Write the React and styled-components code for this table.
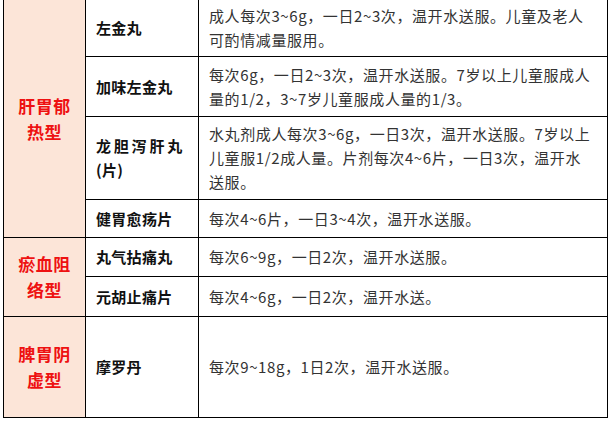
import React from 'react'
import styled, { createGlobalStyle } from 'styled-components'

const GlobalStyle = createGlobalStyle`
  * {
    box-sizing: border-box;
  }
  body {
    margin: 0;
    background: #ffffff;
    font-family: 'Noto Sans CJK SC', 'Noto Sans', sans-serif;
  }
`

const Page = styled.div`
  padding: 0 4px 0 3px;
  overflow: hidden;
  height: 424px;
`

const Table = styled.table`
  width: 605px;
  margin-top: -1px;
  border-collapse: collapse;
  table-layout: fixed;
`

const Row = styled.tr`
  height: ${p => p.h}px;
`

const Category = styled.td`
  width: 82px;
  background: #fce5d8;
  border: 1px solid #000;
  color: #ee1111;
  font-weight: 700;
  font-size: 17px;
  line-height: 26px;
  letter-spacing: 0.5px;
  text-align: center;
  vertical-align: middle;
  padding: 0 4px;
`

const Name = styled.td`
  width: 113px;
  border: 1px solid #000;
  color: #111;
  font-weight: 700;
  font-size: 15px;
  line-height: 24px;
  padding: 0 4px 0 10px;
  white-space: nowrap;
  vertical-align: middle;
`

const Spread = styled.span`
  letter-spacing: ${p => p.spread ? '2.8px' : '0.3px'};
`

const Dose = styled.td`
  border: 1px solid #000;
  color: #333;
  font-size: 15px;
  line-height: 24px;
  letter-spacing: 0.6px;
  padding: 0 6px 0 10px;
  vertical-align: middle;
  white-space: nowrap;
`

const groups = [
  {
    cat: ['肝胃郁', '热型'],
    rows: [
      { h: 57, name: ['左金丸'], dose: ['成人每次3~6g，一日2~3次，温开水送服。儿童及老人', '可酌情减量服用。'] },
      { h: 60, name: ['加味左金丸'], dose: ['每次6g，一日2~3次，温开水送服。7岁以上儿童服成人', '量的1/2，3~7岁儿童服成人量的1/3。'] },
      { h: 83, name: ['龙胆泻肝丸', '(片)'], spread: true, dose: ['水丸剂成人每次3~6g，一日3次，温开水送服。7岁以上', '儿童服1/2成人量。片剂每次4~6片，一日3次，温开水', '送服。'] },
      { h: 38, name: ['健胃愈疡片'], dose: ['每次4~6片，一日3~4次，温开水送服。'] },
    ],
  },
  {
    cat: ['瘀血阻', '络型'],
    rows: [
      { h: 39, name: ['丸气拈痛丸'], dose: ['每次6~9g，一日2次，温开水送服。'] },
      { h: 40, name: ['元胡止痛片'], dose: ['每次4~6g，一日2次，温开水送。'] },
    ],
  },
  {
    cat: ['脾胃阴', '虚型'],
    rows: [
      { h: 101, name: ['摩罗丹'], dose: ['每次9~18g，1日2次，温开水送服。'] },
    ],
  },
]

const lines = arr => arr.map((t, i) => (
  <React.Fragment key={i}>
    {i > 0 && <br />}
    {t}
  </React.Fragment>
))

export default function App() {
  return (
    <Page>
      <GlobalStyle />
      <Table>
        <tbody>
          {groups.map((g, gi) =>
            g.rows.map((r, ri) => (
              <Row key={`${gi}-${ri}`} h={r.h}>
                {ri === 0 && <Category rowSpan={g.rows.length}>{lines(g.cat)}</Category>}
                <Name>
                  {r.name.map((t, i) => (
                    <React.Fragment key={i}>
                      {i > 0 && <br />}
                      <Spread spread={r.spread && i === 0}>{t}</Spread>
                    </React.Fragment>
                  ))}
                </Name>
                <Dose>{lines(r.dose)}</Dose>
              </Row>
            ))
          )}
        </tbody>
      </Table>
    </Page>
  )
}
